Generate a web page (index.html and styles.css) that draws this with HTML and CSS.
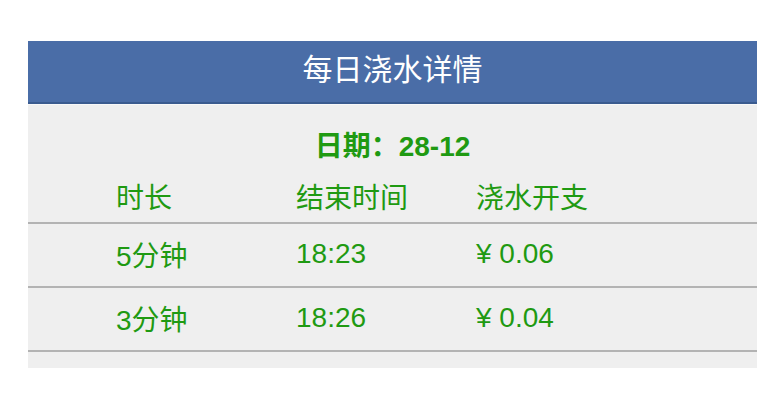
FILE: index.html
```html
<!DOCTYPE html>
<html lang="zh">
<head>
<meta charset="utf-8">
<title>每日浇水详情</title>
<link rel="stylesheet" href="styles.css">
</head>
<body>
<section class="panel">
  <header class="title">每日浇水详情</header>
  <div class="content">
    <div class="date">日期：28-12</div>
    <div class="row head">
      <span>时长</span><span>结束时间</span><span>浇水开支</span>
    </div>
    <div class="row">
      <span>5分钟</span><span>18:23</span><span>¥ 0.06</span>
    </div>
    <div class="row">
      <span>3分钟</span><span>18:26</span><span>¥ 0.04</span>
    </div>
  </div>
</section>
</body>
</html>
```
FILE: styles.css
```css
* { box-sizing: border-box; }
body {
  margin: 0;
  background: #ffffff;
  font-family: "Liberation Sans", "Noto Sans CJK SC", sans-serif;
}
.panel {
  margin: 41px 0 0 28px;
  width: 729px;
  background: #efefef;
}
.title {
  height: 63px;
  background: #4a6da7;
  border-bottom: 2px solid #3a5b8f;
  color: #ffffff;
  font-size: 30px;
  line-height: 58px;
  text-align: center;
}
.content {
  border-top: 1px solid #f8f8f8;
  padding-bottom: 16px;
  color: #1f9a12;
}
.date {
  padding-top: 24px;
  height: 60px;
  line-height: 36px;
  text-align: center;
  font-size: 28px;
  font-weight: bold;
}
.row {
  display: grid;
  grid-template-columns: 180px 180px 180px;
  padding-left: 88px;
  padding-bottom: 3px;
  height: 64px;
  align-items: center;
  font-size: 28px;
  border-bottom: 2px solid #b3b3b3;
}
.row.head {
  height: 59px;
  padding-top: 16px;
  padding-bottom: 0;
  align-items: start;
  line-height: 36px;
}
```
